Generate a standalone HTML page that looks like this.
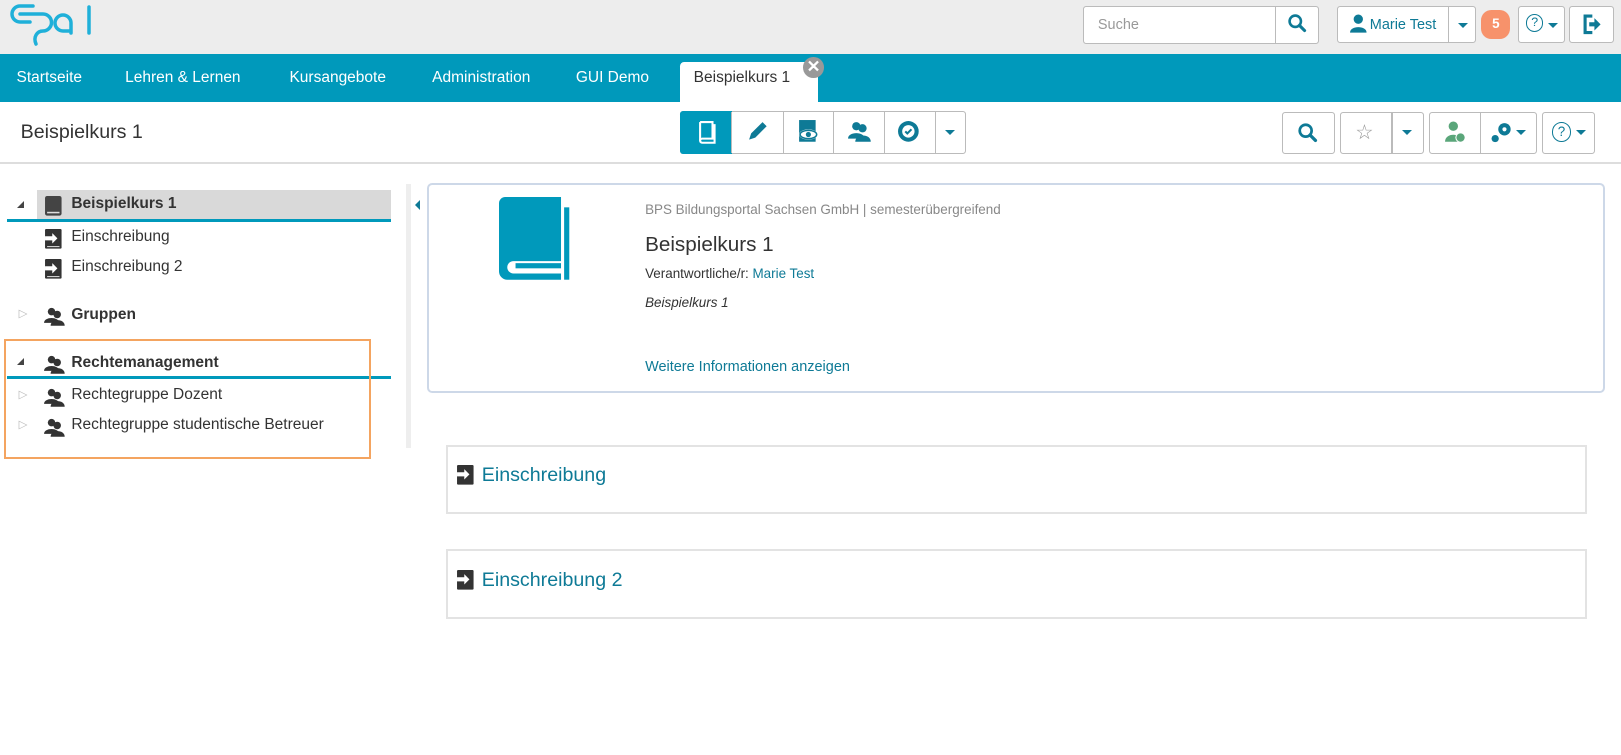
<!DOCTYPE html>
<html><head><meta charset="utf-8"><style>
*{box-sizing:border-box;margin:0;padding:0}
body{width:1621px;height:755px;background:#fff;font-family:"Liberation Sans",Arial,sans-serif;color:#333;overflow:hidden;font-size:14px}
#w{position:relative;width:1568px;height:730px;zoom:1.0338}
.abs{position:absolute}
.btn{position:absolute;border:1px solid #bbb;border-radius:3px;background:#fff}
.nav span{position:absolute;top:67px;color:#fff;font-size:15px}
.teal{color:#0e7a96}
.tree{position:absolute;font-size:15px;color:#333}
.tri{position:absolute;width:0;height:0}
</style></head><body><div id="w">
<!-- header -->
<div class="abs" style="left:0;top:0;width:1568px;height:52px;background:#ededed"></div>
<div class="btn" style="left:1048px;top:6px;width:228px;height:37px"></div>
<div class="abs" style="left:1233px;top:6px;width:1px;height:37px;background:#bbb"></div>
<div class="abs" style="left:1062px;top:16px;color:#999;font-size:14px">Suche</div>
<svg class="abs" style="left:1245px;top:13px" width="20" height="20" viewBox="0 0 20 20"><circle cx="8" cy="8" r="5.5" fill="none" stroke="#0e7a96" stroke-width="2.5"/><path d="M12 12 L17 17" stroke="#0e7a96" stroke-width="3" stroke-linecap="round"/></svg>
<div class="btn" style="left:1293px;top:6px;width:135px;height:36px"></div>
<div class="abs" style="left:1401px;top:6px;width:1px;height:36px;background:#bbb"></div>
<svg class="abs" style="left:1305px;top:14px" width="18" height="18" viewBox="0 0 18 18" fill="#0e7a96"><circle cx="9" cy="5" r="4.5"/><path d="M1 18 C1 11 17 11 17 18Z"/></svg>
<div class="abs teal" style="left:1325px;top:16px;font-size:14px">Marie Test</div>
<div class="tri" style="left:1410px;top:22px;border-left:5px solid transparent;border-right:5px solid transparent;border-top:5px solid #0e7a96"></div>
<div class="abs" style="left:1433px;top:10px;width:28px;height:28px;border-radius:10px;background:#f7926b;color:#fff;font-weight:bold;text-align:center;line-height:28px;font-size:13px">5</div>
<div class="btn" style="left:1468px;top:6px;width:46px;height:36px"></div>
<div class="abs" style="left:1476px;top:14px;width:17px;height:17px;border:1.5px solid #0e7a96;border-radius:50%;color:#0e7a96;font-size:12px;text-align:center;line-height:15px">?</div>
<div class="tri" style="left:1497px;top:22px;border-left:5px solid transparent;border-right:5px solid transparent;border-top:5px solid #0e7a96"></div>
<div class="btn" style="left:1518px;top:6px;width:43px;height:36px"></div>
<svg class="abs" style="left:1530px;top:14px" width="20" height="20" viewBox="0 0 20 20"><path d="M10 2 H3 V18 H10" fill="none" stroke="#0e7a96" stroke-width="3"/><path d="M7 8 H12 V4 L18 10 L12 16 V12 H7Z" fill="#0e7a96"/></svg>
<!-- nav -->
<div class="abs" style="left:0;top:52px;width:1568px;height:47px;background:#0099bb"></div>
<div class="nav"><span style="left:16px">Startseite</span><span style="left:121px">Lehren &amp; Lernen</span><span style="left:280px">Kursangebote</span><span style="left:418px">Administration</span><span style="left:557px">GUI Demo</span></div>
<div class="abs" style="left:658px;top:60px;width:133px;height:39px;background:#fff;border-radius:4px 4px 0 0"></div>
<div class="abs" style="left:671px;top:67px;font-size:15px;color:#333">Beispielkurs 1</div>
<div class="abs" style="left:777px;top:55px;width:20px;height:20px;border-radius:50%;background:#999;color:#fff;font-weight:bold;text-align:center;line-height:19px;font-size:16px">✕</div>
<!-- title bar -->
<div class="abs" style="left:20px;top:117px;font-size:19px;color:#333">Beispielkurs 1</div>
<div class="abs" style="left:0;top:157px;width:1568px;height:2px;background:#ddd"></div>
<div class="btn" style="left:658px;top:107px;width:276px;height:42px"></div>
<div class="abs" style="left:658px;top:107px;width:50px;height:42px;background:#0099bb;border-radius:3px 0 0 3px"></div>
<div class="abs" style="left:757px;top:108px;width:1px;height:40px;background:#bbb"></div>
<div class="abs" style="left:806px;top:108px;width:1px;height:40px;background:#bbb"></div>
<div class="abs" style="left:855px;top:108px;width:1px;height:40px;background:#bbb"></div>
<div class="abs" style="left:904px;top:108px;width:1px;height:40px;background:#bbb"></div>
<div class="abs" style="left:707px;top:108px;width:1px;height:40px;background:#bbb"></div>
<svg class="abs" style="left:674px;top:116px" width="20" height="24" viewBox="0 0 20 24"><path d="M3 2 H15 V18 H5 A2 2 0 0 0 5 22 H17 V4" fill="none" stroke="#fff" stroke-width="2"/><path d="M3 2 V20" stroke="#fff" stroke-width="2"/></svg>
<svg class="abs" style="left:722px;top:116px" width="22" height="22" viewBox="0 0 22 22"><path d="M3 19 L5 13 L16 2 L20 6 L9 17Z" fill="#0e7a96"/></svg>
<svg class="abs" style="left:770px;top:115px" width="24" height="24" viewBox="0 0 24 24"><rect x="3" y="1" width="16" height="21" fill="#0e7a96"/><ellipse cx="12" cy="15" rx="9" ry="5" fill="#fff"/><ellipse cx="12" cy="15" rx="8" ry="4" fill="none" stroke="#0e7a96" stroke-width="1.5"/><circle cx="12" cy="15" r="2.5" fill="#0e7a96"/></svg>
<svg class="abs" style="left:819px;top:116px" width="24" height="22" viewBox="0 0 24 22" fill="#0e7a96"><circle cx="9" cy="6" r="4"/><path d="M1 18 C1 11 17 11 17 18Z"/><circle cx="15" cy="8" r="4"/><path d="M8 21 C8 13 23 13 23 21Z"/></svg>
<svg class="abs" style="left:868px;top:116px" width="22" height="22" viewBox="0 0 22 22"><circle cx="11" cy="11" r="10" fill="#0e7a96"/><circle cx="11" cy="11" r="6" fill="#fff"/><path d="M8 11 L10 13 L14 9" fill="none" stroke="#0e7a96" stroke-width="2"/></svg>
<div class="tri" style="left:914px;top:126px;border-left:5px solid transparent;border-right:5px solid transparent;border-top:5px solid #0e7a96"></div>
<div class="btn" style="left:1240px;top:108px;width:51px;height:41px"></div>
<svg class="abs" style="left:1255px;top:118px" width="21" height="21" viewBox="0 0 20 20"><circle cx="8" cy="8" r="5.5" fill="none" stroke="#0e7a96" stroke-width="2.5"/><path d="M12 12 L17 17" stroke="#0e7a96" stroke-width="3" stroke-linecap="round"/></svg>
<div class="btn" style="left:1296px;top:108px;width:81px;height:41px"></div>
<div class="abs" style="left:1346px;top:109px;width:1px;height:39px;background:#bbb"></div>
<div class="abs" style="left:1311px;top:116px;color:#999;font-size:20px">☆</div>
<div class="tri" style="left:1356px;top:126px;border-left:5px solid transparent;border-right:5px solid transparent;border-top:5px solid #0e7a96"></div>
<div class="btn" style="left:1382px;top:108px;width:105px;height:41px"></div>
<div class="abs" style="left:1432px;top:109px;width:1px;height:39px;background:#bbb"></div>
<svg class="abs" style="left:1397px;top:116px" width="22" height="24" viewBox="0 0 22 24" fill="#5aa67a"><circle cx="9" cy="6" r="4.5"/><path d="M1 21 C1 12 17 12 17 21Z"/><circle cx="16" cy="17" r="5" fill="#fff"/><circle cx="16" cy="17" r="4"/></svg>
<svg class="abs" style="left:1441px;top:117px" width="24" height="22" viewBox="0 0 24 22" fill="#0e7a96"><circle cx="14" cy="8" r="6"/><circle cx="14" cy="8" r="2" fill="#fff"/><circle cx="5" cy="17" r="3.5"/></svg>
<div class="tri" style="left:1466px;top:126px;border-left:5px solid transparent;border-right:5px solid transparent;border-top:5px solid #0e7a96"></div>
<div class="btn" style="left:1492px;top:108px;width:51px;height:41px"></div>
<div class="abs" style="left:1501px;top:118px;width:19px;height:19px;border:1.5px solid #0e7a96;border-radius:50%;color:#0e7a96;font-size:13px;text-align:center;line-height:17px">?</div>
<div class="tri" style="left:1524px;top:126px;border-left:5px solid transparent;border-right:5px solid transparent;border-top:5px solid #0e7a96"></div>
<!-- tree -->
<div class="abs" style="left:36px;top:184px;width:342px;height:29px;background:#d9d9d9"></div>
<div class="abs" style="left:7px;top:212px;width:371px;height:3px;background:#0099bb"></div>
<div class="abs" style="left:7px;top:364px;width:371px;height:3px;background:#0099bb"></div>
<div class="abs" style="left:4px;top:328px;width:355px;height:116px;border:2px solid #f4a460"></div>
<div class="abs" style="left:393px;top:178px;width:5px;height:255px;background:#eee"></div>
<div class="tri" style="left:401px;top:193px;border-top:5px solid transparent;border-bottom:5px solid transparent;border-right:5px solid #0e7a96"></div>
<div class="tri" style="left:16px;top:194px;border-left:7px solid transparent;border-bottom:7px solid #444"></div>
<div class="tri" style="left:16px;top:346px;border-left:7px solid transparent;border-bottom:7px solid #444"></div>
<div class="tree" style="left:18px;top:296px;color:#bbb;font-size:11px">▷</div>
<div class="tree" style="left:18px;top:374px;color:#bbb;font-size:11px">▷</div>
<div class="tree" style="left:18px;top:403px;color:#bbb;font-size:11px">▷</div>
<svg class="abs" style="left:43px;top:189px" width="18" height="21" viewBox="0 0 18 21"><rect x="1" y="1" width="16" height="19" rx="2" fill="#444"/><path d="M3 17 H15" stroke="#ddd" stroke-width="1.5"/></svg>
<div class="tree" style="left:69px;top:189px;font-weight:bold">Beispielkurs 1</div>
<svg class="abs" style="left:43px;top:221px" width="18" height="21" viewBox="0 0 18 21"><rect x="1" y="1" width="16" height="19" rx="1" fill="#333"/><path d="M1 8 H8 V5 L13 10 L8 15 V12 H1Z" fill="#fff"/><path d="M3 18 H15" stroke="#ddd"/></svg>
<div class="tree" style="left:69px;top:221px">Einschreibung</div>
<svg class="abs" style="left:43px;top:250px" width="18" height="21" viewBox="0 0 18 21"><rect x="1" y="1" width="16" height="19" rx="1" fill="#333"/><path d="M1 8 H8 V5 L13 10 L8 15 V12 H1Z" fill="#fff"/><path d="M3 18 H15" stroke="#ddd"/></svg>
<div class="tree" style="left:69px;top:250px">Einschreibung 2</div>
<svg class="abs" style="left:42px;top:296px;" width="22" height="20" viewBox="0 0 24 22" fill="#333"><circle cx="9" cy="6" r="4"/><path d="M1 18 C1 11 17 11 17 18Z"/><circle cx="15" cy="9" r="4"/><path d="M8 21 C8 13 23 13 23 21Z"/></svg>
<div class="tree" style="left:69px;top:296px;font-weight:bold">Gruppen</div>
<svg class="abs" style="left:42px;top:342px" width="22" height="20" viewBox="0 0 24 22" fill="#333"><circle cx="9" cy="6" r="4"/><path d="M1 18 C1 11 17 11 17 18Z"/><circle cx="15" cy="9" r="4"/><path d="M8 21 C8 13 23 13 23 21Z"/></svg>
<div class="tree" style="left:69px;top:342px;font-weight:bold">Rechtemanagement</div>
<svg class="abs" style="left:42px;top:374px" width="22" height="20" viewBox="0 0 24 22" fill="#333"><circle cx="9" cy="6" r="4"/><path d="M1 18 C1 11 17 11 17 18Z"/><circle cx="15" cy="9" r="4"/><path d="M8 21 C8 13 23 13 23 21Z"/></svg>
<div class="tree" style="left:69px;top:373px">Rechtegruppe Dozent</div>
<svg class="abs" style="left:42px;top:403px" width="22" height="20" viewBox="0 0 24 22" fill="#333"><circle cx="9" cy="6" r="4"/><path d="M1 18 C1 11 17 11 17 18Z"/><circle cx="15" cy="9" r="4"/><path d="M8 21 C8 13 23 13 23 21Z"/></svg>
<div class="tree" style="left:69px;top:402px">Rechtegruppe studentische Betreuer</div>
<!-- card -->
<div class="abs" style="left:413px;top:177px;width:1140px;height:203px;border:2px solid #cdd8e8;border-radius:5px"></div>
<svg class="abs" style="left:483px;top:191px" width="70" height="80" viewBox="0 0 70 80"><path d="M6 0 H60 V62 H14 A6 6 0 0 0 14 74 H60 V80 H8 A8 8 0 0 1 0 72 V6 A6 6 0 0 1 6 0Z" fill="#0099bb"/><rect x="16" y="64" width="44" height="5" fill="#0099bb"/><rect x="63" y="10" width="5" height="70" fill="#0099bb"/></svg>
<div class="abs" style="left:624px;top:195px;color:#888;font-size:13px">BPS Bildungsportal Sachsen GmbH | semesterübergreifend</div>
<div class="abs" style="left:624px;top:225px;font-size:20px;color:#333">Beispielkurs 1</div>
<div class="abs" style="left:624px;top:257px;font-size:13px">Verantwortliche/r: <span class="teal">Marie Test</span></div>
<div class="abs" style="left:624px;top:285px;font-size:13px;font-style:italic">Beispielkurs 1</div>
<div class="abs teal" style="left:624px;top:347px;font-size:14px">Weitere Informationen anzeigen</div>
<div class="abs" style="left:431px;top:430px;width:1104px;height:67px;border:2px solid #e3e3e3"></div>
<svg class="abs" style="left:441px;top:449px" width="18" height="21" viewBox="0 0 18 21"><rect x="1" y="1" width="16" height="19" rx="1" fill="#333"/><path d="M1 8 H8 V5 L13 10 L8 15 V12 H1Z" fill="#fff"/></svg>
<div class="abs teal" style="left:466px;top:449px;font-size:19px">Einschreibung</div>
<div class="abs" style="left:431px;top:531px;width:1104px;height:68px;border:2px solid #e3e3e3"></div>
<svg class="abs" style="left:441px;top:550px" width="18" height="21" viewBox="0 0 18 21"><rect x="1" y="1" width="16" height="19" rx="1" fill="#333"/><path d="M1 8 H8 V5 L13 10 L8 15 V12 H1Z" fill="#fff"/></svg>
<div class="abs teal" style="left:466px;top:550px;font-size:19px">Einschreibung 2</div>
</div>
<svg style="position:absolute;left:0;top:0" width="110" height="52" viewBox="0 0 110 52" fill="none" stroke="#1fb0d9" stroke-width="3.5" stroke-linecap="round">
<path d="M33 6 H20 A8 8 0 0 0 20 22 H30"/>
<path d="M20 14 H43 A8.5 8.5 0 0 1 43 31 C37 31 33 37 36 44"/>
<path d="M71 33 V23 A8 8 0 1 0 63 31 H71"/>
<path d="M89 7 V33"/>
</svg>
</body></html>
